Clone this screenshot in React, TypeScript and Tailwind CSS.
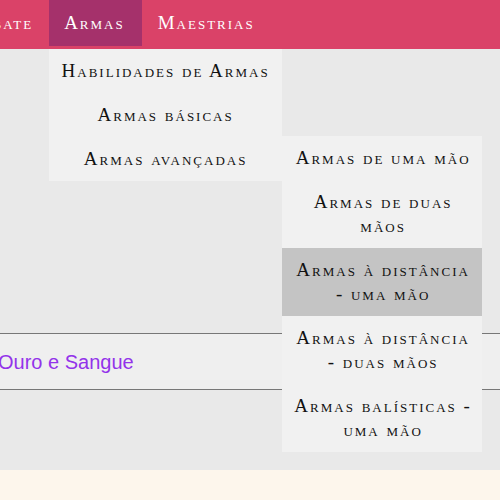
import React from "react";

const serif = {
  fontFamily: '"Liberation Serif", "Times New Roman", serif',
};

const subItems = [
  { label: "Armas de uma mão", hover: false },
  { label: "Armas de duas mãos", hover: false },
  { label: "Armas à distância - uma mão", hover: true },
  { label: "Armas à distância - duas mãos", hover: false },
  { label: "Armas balísticas - uma mão", hover: false },
];

export default function App() {
  return (
    <div className="w-[500px] h-[500px] overflow-hidden bg-[#fdf6ec] flex flex-col">
      <nav
        className="h-[49px] shrink-0 bg-[#da4268] flex items-start relative z-10 [font-variant:small-caps] text-[19px] tracking-[2px] text-white"
        style={serif}
      >
        <div className="flex ml-[-63px]">
          <div className="h-[46px] px-4 flex items-center">Combate</div>
          <div className="relative">
            <div className="h-[46px] pl-[15px] pr-[17px] flex items-center bg-[#a5316b]">Armas</div>
            <div className="absolute left-0 top-[49px] w-[233px] bg-[#f1f1f1] text-[#111]">
              <div className="h-[44px] flex items-center justify-center">Habilidades de Armas</div>
              <div className="h-[44px] flex items-center justify-center">Armas básicas</div>
              <div className="relative h-[44px] flex items-center justify-center">
                Armas avançadas
                <div className="absolute left-full top-[-1px] w-[200px] bg-[#f1f1f1] flex flex-col">
                  {subItems.map((s) => (
                    <div
                      key={s.label}
                      className={
                        "py-[10px] pl-[9px] pr-[7px] text-center leading-[24px] " +
                        (s.hover ? "bg-[#c4c4c4]" : "")
                      }
                    >
                      {s.label}
                    </div>
                  ))}
                </div>
              </div>
            </div>
          </div>
          <div className="h-[46px] px-4 flex items-center">Maestrias</div>
        </div>
      </nav>
      <main className="h-[421px] shrink-0 bg-[#e9e9e9] pt-[284px]">
        <div className="h-[57px] border-y border-[#777] bg-[#efefef] flex items-center">
          <a
            className="ml-[-2px] text-[20px] text-[#9333ea]"
            style={{ fontFamily: '"Liberation Sans", Arial, sans-serif' }}
          >
            Ouro e Sangue
          </a>
        </div>
      </main>
      <footer className="flex-1 bg-[#fdf6ec]" />
    </div>
  );
}
